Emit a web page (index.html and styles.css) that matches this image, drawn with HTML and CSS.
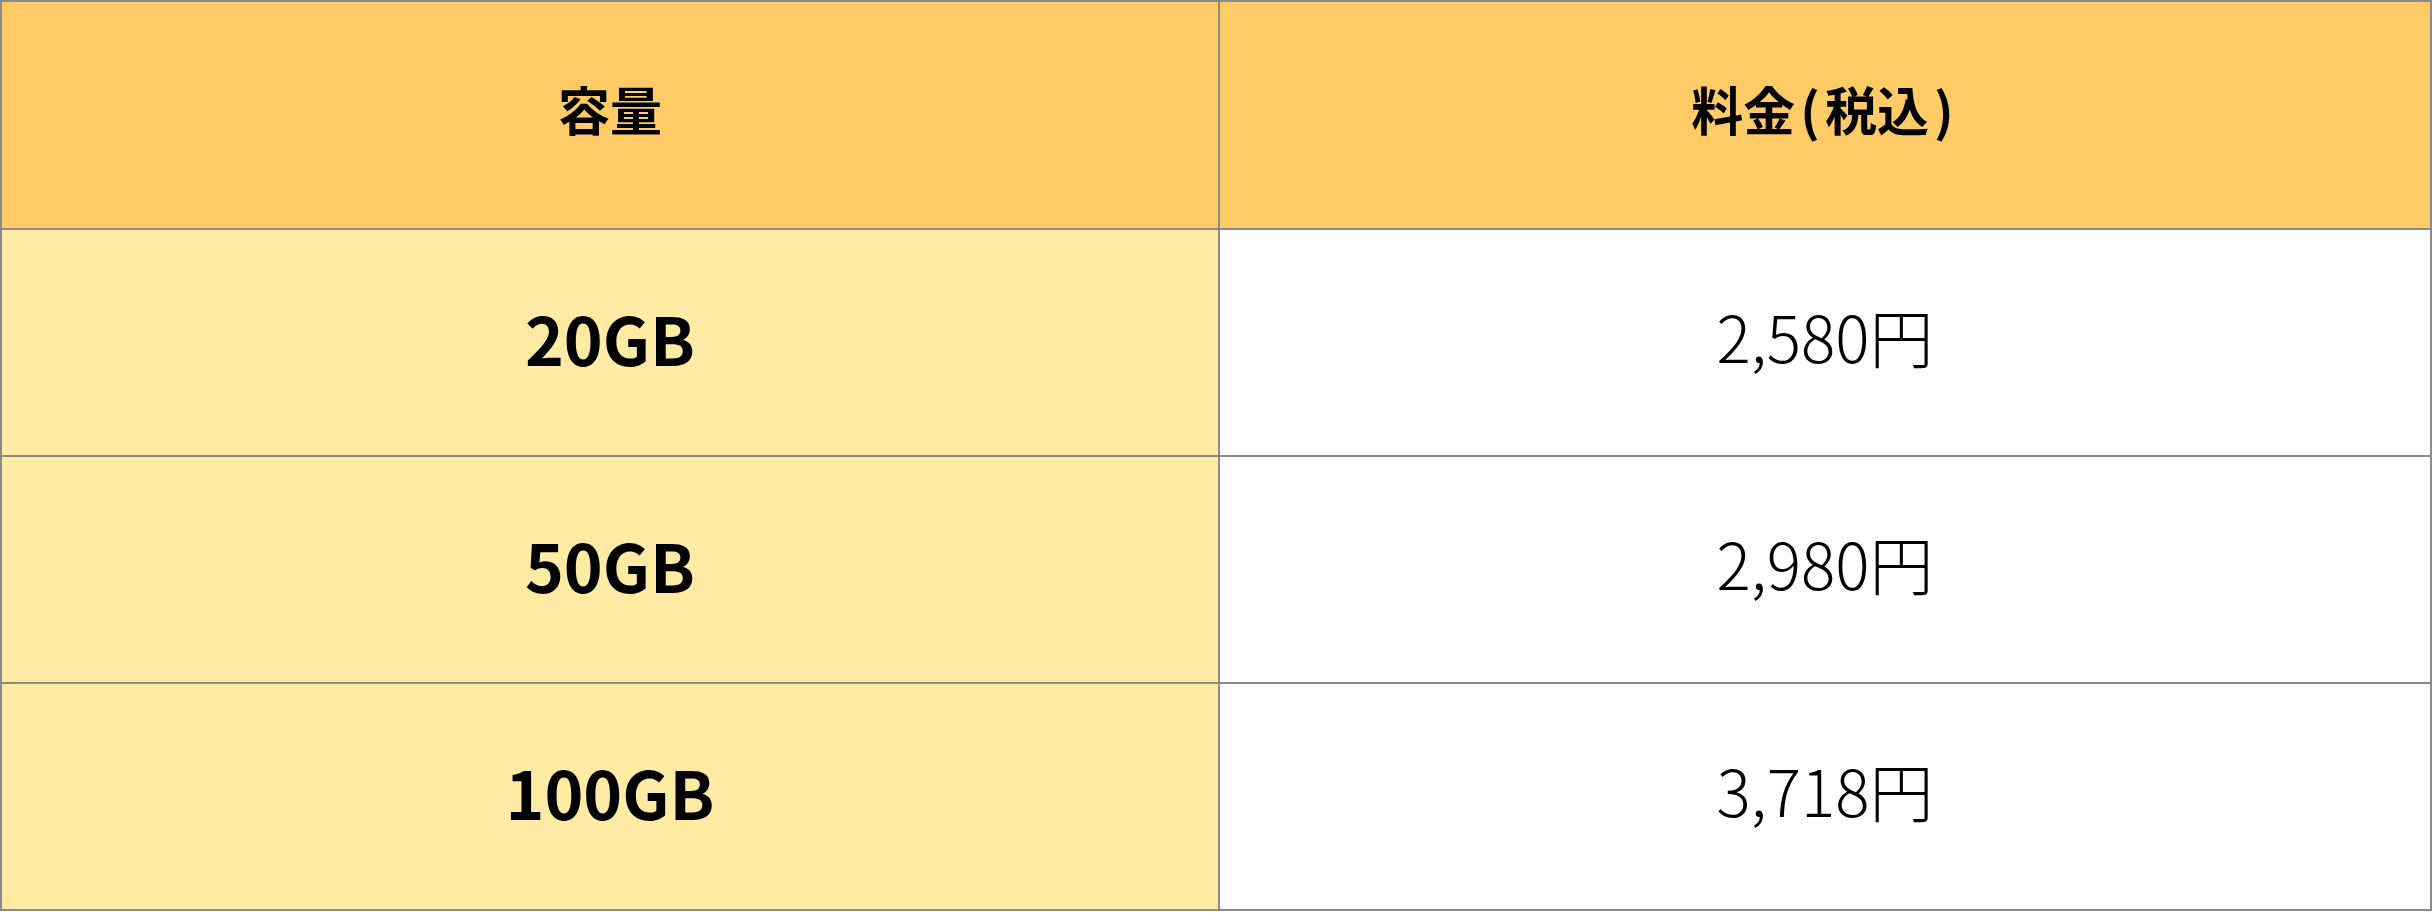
FILE: index.html
```html
<!DOCTYPE html>
<html lang="ja">
<head>
<meta charset="utf-8">
<title>料金表</title>
<link rel="stylesheet" href="styles.css">
</head>
<body>
<div class="table">
  <div class="cell head">容量</div>
  <div class="cell head">料金<span class="paren">(</span>税込<span class="paren">)</span></div>
  <div class="cell cap">20GB</div>
  <div class="cell price">2,580円</div>
  <div class="cell cap">50GB</div>
  <div class="cell price">2,980円</div>
  <div class="cell cap">100GB</div>
  <div class="cell price">3,718円</div>
</div>
</body>
</html>
```
FILE: styles.css
```css
html, body {
  margin: 0;
  padding: 0;
  background: #ffffff;
}
.table {
  display: grid;
  grid-template-columns: 1216px 1210px;
  grid-template-rows: 226px 225px 225px 225px;
  gap: 2px;
  padding: 2px;
  width: max-content;
  background: #8a8a8a;
  font-family: "Noto Sans CJK JP", "Noto Sans", sans-serif;
  color: #000;
}
.cell {
  display: flex;
  align-items: center;
  justify-content: center;
  box-sizing: border-box;
  padding-bottom: 12px;
}
.head {
  background: #ffcb66;
  font-weight: 700;
  font-size: 52px;
  padding-bottom: 14px;
}
.paren {
  margin: 0 5px;
}
.cap {
  background: #ffeba4;
  font-weight: 700;
  font-size: 66px;
}
.price {
  background: #ffffff;
  font-weight: 300;
  font-size: 64px;
  padding-bottom: 16px;
}
```
